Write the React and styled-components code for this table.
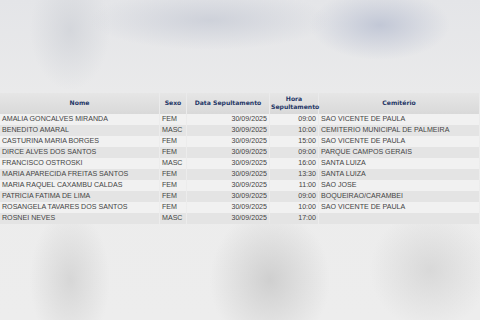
import styled, { createGlobalStyle } from "styled-components";

const GlobalStyle = createGlobalStyle`
  html, body {
    margin: 0;
    padding: 0;
    width: 480px;
    height: 320px;
    overflow: hidden;
  }
  body {
    font-family: "Liberation Sans", Arial, sans-serif;
  }
`;

const Page = styled.div`
  width: 480px;
  height: 320px;
  box-sizing: border-box;
  padding-top: 93px;
  background:
    radial-gradient(ellipse 70px 35px at 380px 25px, rgba(190, 196, 212, 0.9), transparent),
    radial-gradient(ellipse 120px 30px at 210px 20px, rgba(200, 204, 214, 0.8), transparent),
    radial-gradient(ellipse 40px 60px at 70px 30px, rgba(205, 208, 214, 0.7), transparent),
    radial-gradient(ellipse 60px 70px at 270px 280px, rgba(200, 200, 200, 0.8), transparent),
    radial-gradient(ellipse 40px 70px at 70px 280px, rgba(205, 205, 205, 0.7), transparent),
    radial-gradient(ellipse 60px 60px at 430px 270px, rgba(208, 208, 208, 0.7), transparent),
    linear-gradient(180deg, #e4e5e8 0%, #ececec 40%, #ededed 100%);
`;

const Table = styled.table`
  width: 481px;
  table-layout: fixed;
  border-collapse: separate;
  border-spacing: 1px 0;
  margin-left: -1px;
`;

const HeadRow = styled.tr`
  background: linear-gradient(180deg, #e6e6e6, #d9d9d9);
`;

const Th = styled.th`
  width: ${(p) => (p.w ? `${p.w}px` : "auto")};
  padding: 2px 1px 3px;
  height: 16px;
  font-family: "DejaVu Sans", Verdana, sans-serif;
  font-size: 6.1px;
  line-height: 8px;
  font-weight: bold;
  color: #1f3767;
  text-align: center;
  vertical-align: middle;
`;

const Row = styled.tr`
  background: ${(p) => (p.alt ? "#e4e4e4" : "#f1f1f1")};
`;

const Td = styled.td`
  height: 11px;
  padding: 0 2px;
  font-size: 7.1px;
  line-height: 11px;
  color: #444;
  white-space: nowrap;
  overflow: hidden;
  text-align: ${(p) => p.align || "left"};
`;

const rows = [
  ["AMALIA GONCALVES MIRANDA", "FEM", "09:00", "SAO VICENTE DE PAULA"],
  ["BENEDITO AMARAL", "MASC", "10:00", "CEMITERIO MUNICIPAL DE PALMEIRA"],
  ["CASTURINA MARIA BORGES", "FEM", "15:00", "SAO VICENTE DE PAULA"],
  ["DIRCE ALVES DOS SANTOS", "FEM", "09:00", "PARQUE CAMPOS GERAIS"],
  ["FRANCISCO OSTROSKI", "MASC", "16:00", "SANTA LUIZA"],
  ["MARIA APARECIDA FREITAS SANTOS", "FEM", "13:30", "SANTA LUIZA"],
  ["MARIA RAQUEL CAXAMBU CALDAS", "FEM", "11:00", "SAO JOSE"],
  ["PATRICIA FATIMA DE LIMA", "FEM", "09:00", "BOQUEIRAO/CARAMBEI"],
  ["ROSANGELA TAVARES DOS SANTOS", "FEM", "10:00", "SAO VICENTE DE PAULA"],
  ["ROSNEI NEVES", "MASC", "17:00", ""],
];

export default function App() {
  return (
    <Page>
      <GlobalStyle />
      <Table>
        <thead>
          <HeadRow>
            <Th w={157}>Nome</Th>
            <Th w={24}>Sexo</Th>
            <Th w={80}>Data Sepultamento</Th>
            <Th w={46}>
              Hora
              <br />
              Sepultamento
            </Th>
            <Th>Cemitério</Th>
          </HeadRow>
        </thead>
        <tbody>
          {rows.map((r, i) => (
            <Row key={r[0]} alt={i % 2 === 1}>
              <Td>{r[0]}</Td>
              <Td>{r[1]}</Td>
              <Td align="right">30/09/2025</Td>
              <Td align="right">{r[2]}</Td>
              <Td>{r[3]}</Td>
            </Row>
          ))}
        </tbody>
      </Table>
    </Page>
  );
}
